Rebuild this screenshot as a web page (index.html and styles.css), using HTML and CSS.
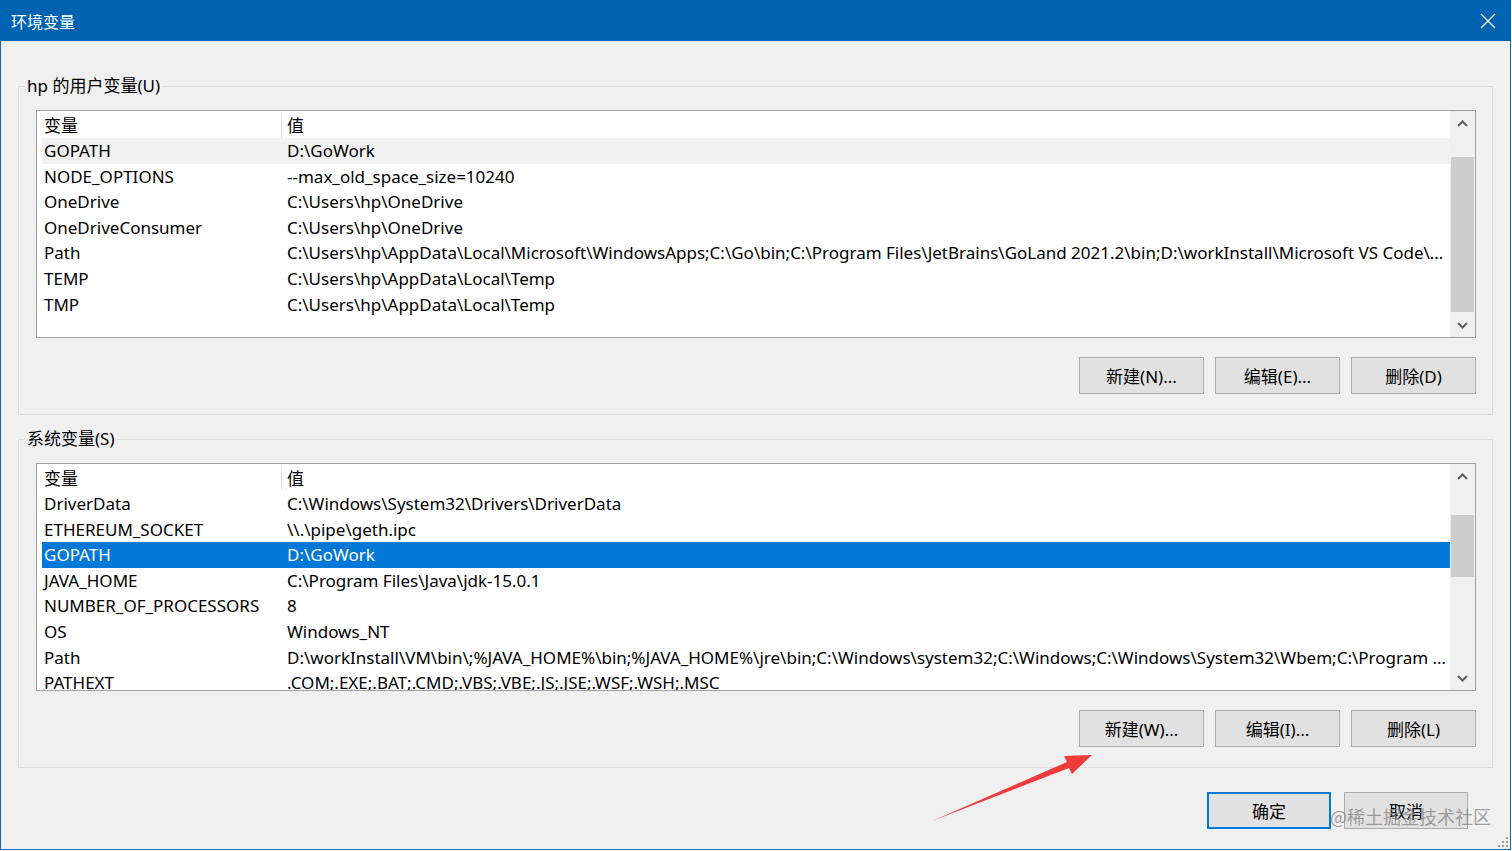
FILE: index.html
```html
<!DOCTYPE html>
<html lang="zh-CN">
<head>
    <meta charset="UTF-8">
    <title>环境变量</title>
    <link rel="stylesheet" href="styles.css">
</head>
<body>
<div class="window">
    <div class="titlebar">
        <span class="title">环境变量</span>
        <svg class="close" width="16" height="16" viewBox="0 0 16 16">
            <path d="M1 1L15 15M15 1L1 15" stroke="#fff" stroke-width="1.3" fill="none"/>
        </svg>
    </div>

    <div class="content">
        <fieldset class="group">
            <legend>hp 的用户变量(U)</legend>
            <div class="list">
                <div class="list-body">
                    <div class="list-head">
                        <span class="col-name">变量</span><span class="col-value">值</span>
                    </div>
                    <div class="row hot"><span class="col-name">GOPATH</span><span class="col-value">D:\GoWork</span></div>
                    <div class="row"><span class="col-name">NODE_OPTIONS</span><span class="col-value">--max_old_space_size=10240</span></div>
                    <div class="row"><span class="col-name">OneDrive</span><span class="col-value">C:\Users\hp\OneDrive</span></div>
                    <div class="row"><span class="col-name">OneDriveConsumer</span><span class="col-value">C:\Users\hp\OneDrive</span></div>
                    <div class="row"><span class="col-name">Path</span><span class="col-value">C:\Users\hp\AppData\Local\Microsoft\WindowsApps;C:\Go\bin;C:\Program Files\JetBrains\GoLand 2021.2\bin;D:\workInstall\Microsoft VS Code\bin</span></div>
                    <div class="row"><span class="col-name">TEMP</span><span class="col-value">C:\Users\hp\AppData\Local\Temp</span></div>
                    <div class="row"><span class="col-name">TMP</span><span class="col-value">C:\Users\hp\AppData\Local\Temp</span></div>
                </div>
                <div class="scrollbar">
                    <div class="sb-btn">
                        <svg width="11" height="7" viewBox="0 0 11 7"><path d="M1 6L5.5 1.5L10 6" stroke="#606060" stroke-width="2" fill="none"/></svg>
                    </div>
                    <div class="sb-track"><div class="thumb thumb-user"></div></div>
                    <div class="sb-btn">
                        <svg width="11" height="7" viewBox="0 0 11 7"><path d="M1 1L5.5 5.5L10 1" stroke="#606060" stroke-width="2" fill="none"/></svg>
                    </div>
                </div>
            </div>
            <div class="buttons">
                <button class="btn">新建(N)...</button>
                <button class="btn">编辑(E)...</button>
                <button class="btn">删除(D)</button>
            </div>
        </fieldset>

        <fieldset class="group group-sys">
            <legend>系统变量(S)</legend>
            <div class="list">
                <div class="list-body">
                    <div class="list-head">
                        <span class="col-name">变量</span><span class="col-value">值</span>
                    </div>
                    <div class="row"><span class="col-name">DriverData</span><span class="col-value">C:\Windows\System32\Drivers\DriverData</span></div>
                    <div class="row"><span class="col-name">ETHEREUM_SOCKET</span><span class="col-value">\\.\pipe\geth.ipc</span></div>
                    <div class="row selected"><span class="col-name">GOPATH</span><span class="col-value">D:\GoWork</span></div>
                    <div class="row"><span class="col-name">JAVA_HOME</span><span class="col-value">C:\Program Files\Java\jdk-15.0.1</span></div>
                    <div class="row"><span class="col-name">NUMBER_OF_PROCESSORS</span><span class="col-value">8</span></div>
                    <div class="row"><span class="col-name">OS</span><span class="col-value">Windows_NT</span></div>
                    <div class="row"><span class="col-name">Path</span><span class="col-value">D:\workInstall\VM\bin\;%JAVA_HOME%\bin;%JAVA_HOME%\jre\bin;C:\Windows\system32;C:\Windows;C:\Windows\System32\Wbem;C:\Program Files\dotnet</span></div>
                    <div class="row"><span class="col-name">PATHEXT</span><span class="col-value">.COM;.EXE;.BAT;.CMD;.VBS;.VBE;.JS;.JSE;.WSF;.WSH;.MSC</span></div>
                </div>
                <div class="scrollbar">
                    <div class="sb-btn">
                        <svg width="11" height="7" viewBox="0 0 11 7"><path d="M1 6L5.5 1.5L10 6" stroke="#606060" stroke-width="2" fill="none"/></svg>
                    </div>
                    <div class="sb-track"><div class="thumb thumb-sys"></div></div>
                    <div class="sb-btn">
                        <svg width="11" height="7" viewBox="0 0 11 7"><path d="M1 1L5.5 5.5L10 1" stroke="#606060" stroke-width="2" fill="none"/></svg>
                    </div>
                </div>
            </div>
            <div class="buttons">
                <button class="btn">新建(W)...</button>
                <button class="btn">编辑(I)...</button>
                <button class="btn">删除(L)</button>
            </div>
        </fieldset>

        <div class="dialog-buttons">
            <button class="btn btn-default">确定</button>
            <button class="btn">取消</button>
        </div>
    </div>

    <!-- annotation arrow -->
    <svg class="arrow" width="1512" height="851" viewBox="0 0 1512 851">
        <polygon points="932,822 1069,769 1072,775 1092,756 1064,757 1067,763" fill="#f03b3b"/>
    </svg>
    <span class="watermark">@稀土掘金技术社区</span>
    <svg class="grip" width="10" height="10" viewBox="0 0 10 10">
        <rect x="8" y="0" width="2" height="2" fill="#a0a0a0"/>
        <rect x="4" y="4" width="2" height="2" fill="#a0a0a0"/>
        <rect x="8" y="4" width="2" height="2" fill="#a0a0a0"/>
        <rect x="0" y="8" width="2" height="2" fill="#a0a0a0"/>
        <rect x="4" y="8" width="2" height="2" fill="#a0a0a0"/>
        <rect x="8" y="8" width="2" height="2" fill="#a0a0a0"/>
    </svg>
</div>
</body>
</html>
```

FILE: styles.css
```css
* {
    margin: 0;
    padding: 0;
    box-sizing: border-box;
}

body {
    background-color: #fff;
    font-family: "Noto Sans", "Noto Sans CJK SC", sans-serif;
    color: #000;
}

.window {
    position: relative;
    width: 1511px;
    height: 850px;
    border: 1px solid #1769b5;
    border-top: 0;
    background-color: #f0f0f0;
}

.titlebar {
    display: flex;
    align-items: center;
    justify-content: space-between;
    height: 41px;
    margin: 0 -1px;
    padding: 0 15px 0 11px;
    background-color: #0063b1;
}

.title {
    color: #fff;
    font-size: 16px;
    font-family: "Noto Sans CJK SC", sans-serif;
}

.content {
    padding: 34px 17px 0 17px;
}

.group {
    min-width: 0;
    border: 1px solid #dcdcdc;
    padding: 13px 16px 20px 17px;
}

.group legend {
    margin-left: -11px;
    padding: 0 2px;
    height: 22px;
    line-height: 22px;
    font-size: 17px;
}

.group-sys {
    margin-top: 13px;
}

.list {
    display: flex;
    height: 228px;
    border: 1px solid #a0a0a0;
    background-color: #fff;
}

.list-body {
    flex: 1;
    min-width: 0;
    overflow: hidden;
    padding-top: 1px;
    font-size: 17px;
}

.list-head,
.row {
    display: flex;
    white-space: nowrap;
}

.list-head {
    height: 26px;
    line-height: 27px;
    padding-left: 5px;
}

.list-head .col-value {
    border-left: 1px solid #e5e5e5;
    padding-left: 5px;
}

.row {
    height: 25.6px;
    line-height: 25.6px;
    margin-left: 5px;
}

.col-name {
    flex: none;
    width: 239px;
    padding-left: 2px;
}

.col-value {
    flex: 1;
    min-width: 0;
    padding-left: 6px;
    overflow: hidden;
    text-overflow: ellipsis;
}

.row.hot {
    background-color: #f2f2f2;
}

.row.selected {
    background-color: #0078d7;
    color: #fff;
}

.scrollbar {
    display: flex;
    flex-direction: column;
    width: 25px;
    background-color: #f0f0f0;
}

.sb-btn {
    display: flex;
    align-items: center;
    justify-content: center;
    height: 24px;
}

.sb-track {
    flex: 1;
    padding: 0 1px;
}

.thumb {
    background-color: #cdcdcd;
}

.thumb-user {
    margin-top: 22px;
    height: 155px;
}

.thumb-sys {
    margin-top: 27px;
    height: 62px;
}

.buttons {
    display: flex;
    justify-content: flex-end;
    gap: 11px;
    margin-top: 19px;
}

.btn {
    width: 125px;
    height: 37px;
    border: 1px solid #adadad;
    background-color: #e1e1e1;
    font-family: "Noto Sans", "Noto Sans CJK SC", sans-serif;
    font-size: 17px;
    color: #000;
}

.dialog-buttons {
    display: flex;
    justify-content: flex-end;
    gap: 13px;
    margin-top: 24px;
    padding-right: 25px;
}

.dialog-buttons .btn {
    width: 124px;
}

.btn-default {
    border: 2px solid #0078d7;
}

.arrow {
    position: absolute;
    top: -1px;
    left: -1px;
    pointer-events: none;
}

.watermark {
    position: absolute;
    left: 1329px;
    top: 804px;
    font-family: "Noto Sans CJK SC", sans-serif;
    font-size: 18px;
    line-height: 24px;
    color: rgba(130, 130, 130, .75);
}

.grip {
    position: absolute;
    right: 2px;
    bottom: 2px;
}
```
